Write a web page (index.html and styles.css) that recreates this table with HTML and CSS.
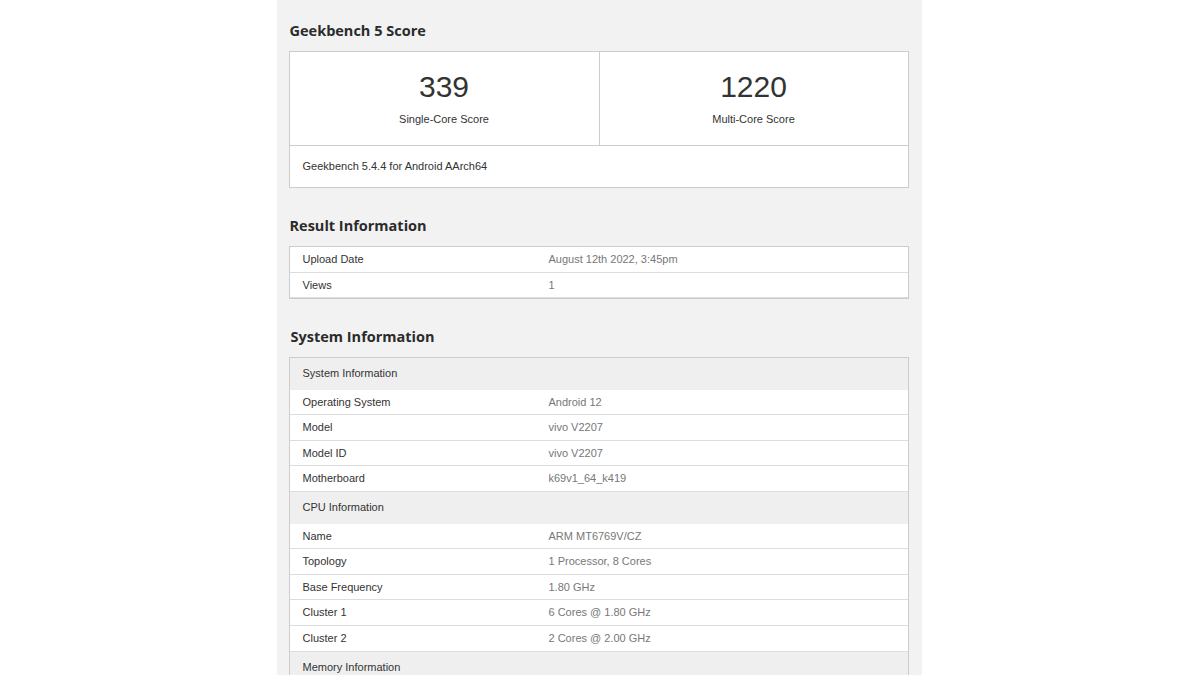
FILE: index.html
```html
<!DOCTYPE html>
<html lang="en">
<head>
<meta charset="utf-8">
<title>Geekbench 5 Score</title>
<link rel="stylesheet" href="styles.css">
</head>
<body>
<main class="column">
  <h2 class="heading">Geekbench 5 Score</h2>
  <section class="card score-card">
    <div class="scores">
      <div class="score">
        <div class="score-value">339</div>
        <div class="score-label">Single-Core Score</div>
      </div>
      <div class="score score-right">
        <div class="score-value">1220</div>
        <div class="score-label">Multi-Core Score</div>
      </div>
    </div>
    <div class="score-footer">Geekbench 5.4.4 for Android AArch64</div>
  </section>

  <h2 class="heading">Result Information</h2>
  <section class="card table">
    <div class="row"><div class="key">Upload Date</div><div class="val">August 12th 2022, 3:45pm</div></div>
    <div class="row"><div class="key">Views</div><div class="val">1</div></div>
  </section>

  <h2 class="heading heading-sys">System Information</h2>
  <section class="card table">
    <div class="group">System Information</div>
    <div class="row"><div class="key">Operating System</div><div class="val">Android 12</div></div>
    <div class="row"><div class="key">Model</div><div class="val">vivo V2207</div></div>
    <div class="row"><div class="key">Model ID</div><div class="val">vivo V2207</div></div>
    <div class="row"><div class="key">Motherboard</div><div class="val">k69v1_64_k419</div></div>
    <div class="group">CPU Information</div>
    <div class="row"><div class="key">Name</div><div class="val">ARM MT6769V/CZ</div></div>
    <div class="row"><div class="key">Topology</div><div class="val">1 Processor, 8 Cores</div></div>
    <div class="row"><div class="key">Base Frequency</div><div class="val">1.80 GHz</div></div>
    <div class="row"><div class="key">Cluster 1</div><div class="val">6 Cores @ 1.80 GHz</div></div>
    <div class="row"><div class="key">Cluster 2</div><div class="val">2 Cores @ 2.00 GHz</div></div>
    <div class="group group-last">Memory Information</div>
  </section>
</main>
</body>
</html>
```

FILE: styles.css
```css
html, body {
  margin: 0;
  padding: 0;
  background: #ffffff;
  height: 675px;
  overflow: hidden;
}

body {
  font-family: "Liberation Sans", Arial, sans-serif;
  color: #333333;
}

.column {
  width: 620px;
  margin: 0 auto;
  padding: 21px 13px 40px 12px;
  background: #f2f2f2;
  min-height: 700px;
  position: relative;
  left: -1px;
}

.heading {
  margin: 0 0 10px 0;
  height: 20px;
  line-height: 20px;
  font-family: "Open Sans", "Liberation Sans", sans-serif;
  font-weight: 700;
  font-size: 14.5px;
  color: #2b2b2b;
  padding-left: 1px;
}

.card + .heading {
  margin-top: 28px;
}

.heading-sys {
  padding-left: 2px;
}

.card {
  background: #ffffff;
  border: 1px solid #cccccc;
}

.scores {
  display: grid;
  grid-template-columns: 1fr 1fr;
  border-bottom: 1px solid #cccccc;
}

.score {
  height: 93px;
  display: flex;
  flex-direction: column;
  align-items: center;
  padding-top: 18px;
  box-sizing: border-box;
}

.score-right {
  border-left: 1px solid #cccccc;
}

.score-value {
  font-size: 30px;
  line-height: 34px;
  color: #333333;
}

.score-label {
  margin-top: 8px;
  font-size: 11px;
  line-height: 14px;
  color: #333333;
}

.score-footer {
  height: 41px;
  line-height: 41px;
  padding-left: 13px;
  font-size: 11px;
  color: #333333;
}

.row {
  display: grid;
  grid-template-columns: 259px 1fr;
  height: 24.6px;
  line-height: 24.6px;
  border-bottom: 1px solid #dddddd;
  font-size: 11px;
}

.key {
  padding-left: 13px;
  color: #333333;
}

.val {
  color: #777777;
}

.group {
  height: 31.5px;
  line-height: 31.5px;
  padding-left: 13px;
  background: #efefef;
  font-size: 11px;
  color: #333333;
}

.group-last {
  height: 40px;
}
```
